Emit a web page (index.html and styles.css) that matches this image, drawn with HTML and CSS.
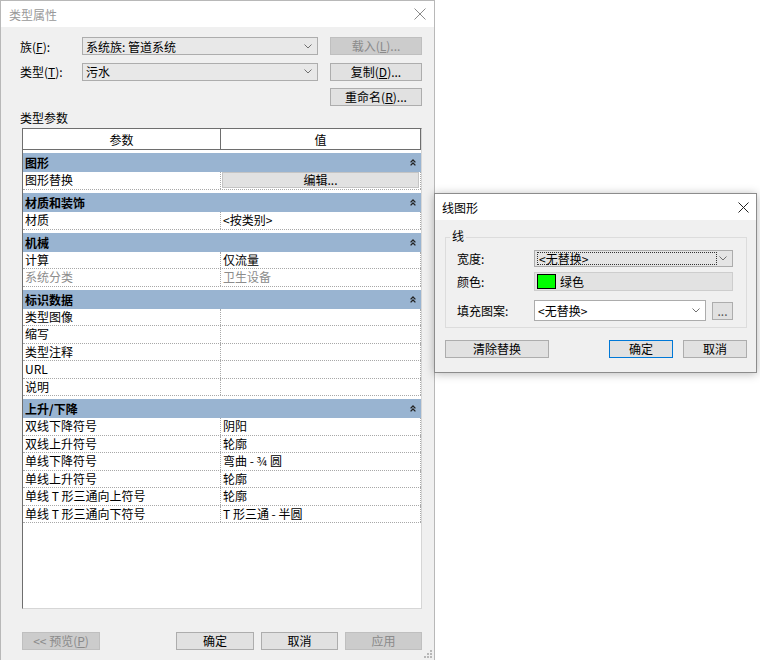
FILE: index.html
```html
<!DOCTYPE html>
<html lang="zh-CN">
<head>
<meta charset="utf-8">
<title>类型属性</title>
<link rel="stylesheet" href="styles.css">
</head>
<body>
<div class="desk">
  <section class="win main">
    <header class="titlebar">
      <span class="title">类型属性</span>
      <svg class="x" width="12" height="12" viewBox="0 0 12 12"><path d="M0.5 0.5 L11.5 11.5 M11.5 0.5 L0.5 11.5" stroke="#8a8a8a" stroke-width="1" fill="none"/></svg>
    </header>
    <div class="form">
      <label class="lab">族(<u>F</u>):</label>
      <div class="combo"><span>系统族: 管道系统</span><svg width="8" height="5" viewBox="0 0 8 5"><path d="M0.5 0.5 L4 4 L7.5 0.5" stroke="#707070" fill="none"/></svg></div>
      <button class="btn dis">载入(<u>L</u>)...</button>
      <label class="lab">类型(<u>T</u>):</label>
      <div class="combo"><span>污水</span><svg width="8" height="5" viewBox="0 0 8 5"><path d="M0.5 0.5 L4 4 L7.5 0.5" stroke="#707070" fill="none"/></svg></div>
      <button class="btn">复制(<u>D</u>)...</button>
      <span></span><span></span>
      <button class="btn">重命名(<u>R</u>)...</button>
    </div>
    <div class="caption">类型参数</div>
    <div class="grid">
      <div class="ghead"><div>参数</div><div>值</div></div>

      <div class="sect"><span>图形</span><svg width="6" height="7" viewBox="0 0 6 7"><path d="M0.6 3.4 L3 1 L5.4 3.4 M0.6 6.4 L3 4 L5.4 6.4" stroke="#222" stroke-width="1.3" fill="none"/></svg></div>
      <div class="row tall"><div>图形替换</div><div class="editcell"><button class="edit">编辑...</button></div></div>

      <div class="sect"><span>材质和装饰</span><svg width="6" height="7" viewBox="0 0 6 7"><path d="M0.6 3.4 L3 1 L5.4 3.4 M0.6 6.4 L3 4 L5.4 6.4" stroke="#222" stroke-width="1.3" fill="none"/></svg></div>
      <div class="row"><div>材质</div><div>&lt;按类别&gt;</div></div>

      <div class="sect"><span>机械</span><svg width="6" height="7" viewBox="0 0 6 7"><path d="M0.6 3.4 L3 1 L5.4 3.4 M0.6 6.4 L3 4 L5.4 6.4" stroke="#222" stroke-width="1.3" fill="none"/></svg></div>
      <div class="row"><div>计算</div><div>仅流量</div></div>
      <div class="row muted"><div>系统分类</div><div>卫生设备</div></div>

      <div class="sect"><span>标识数据</span><svg width="6" height="7" viewBox="0 0 6 7"><path d="M0.6 3.4 L3 1 L5.4 3.4 M0.6 6.4 L3 4 L5.4 6.4" stroke="#222" stroke-width="1.3" fill="none"/></svg></div>
      <div class="row"><div>类型图像</div><div></div></div>
      <div class="row"><div>缩写</div><div></div></div>
      <div class="row"><div>类型注释</div><div></div></div>
      <div class="row"><div>URL</div><div></div></div>
      <div class="row"><div>说明</div><div></div></div>

      <div class="sect"><span>上升/下降</span><svg width="6" height="7" viewBox="0 0 6 7"><path d="M0.6 3.4 L3 1 L5.4 3.4 M0.6 6.4 L3 4 L5.4 6.4" stroke="#222" stroke-width="1.3" fill="none"/></svg></div>
      <div class="row"><div>双线下降符号</div><div>阴阳</div></div>
      <div class="row"><div>双线上升符号</div><div>轮廓</div></div>
      <div class="row"><div>单线下降符号</div><div>弯曲 - ¾ 圆</div></div>
      <div class="row"><div>单线上升符号</div><div>轮廓</div></div>
      <div class="row"><div>单线 T 形三通向上符号</div><div>轮廓</div></div>
      <div class="row"><div>单线 T 形三通向下符号</div><div>T 形三通 - 半圆</div></div>
    </div>
    <div class="footer">
      <button class="btn dis wide">&lt;&lt; 预览(<u>P</u>)</button>
      <div class="fgroup">
        <button class="btn wide">确定</button>
        <button class="btn mid">取消</button>
        <button class="btn dis mid">应用</button>
      </div>
    </div>
    <svg class="grip" width="8" height="8" viewBox="0 0 8 8"><g fill="#b8b8b8"><rect x="6" y="0" width="2" height="2"/><rect x="6" y="3" width="2" height="2"/><rect x="3" y="3" width="2" height="2"/><rect x="6" y="6" width="2" height="2"/><rect x="3" y="6" width="2" height="2"/><rect x="0" y="6" width="2" height="2"/></g></svg>
  </section>

  <section class="win dlg">
    <header class="titlebar">
      <span class="title">线图形</span>
      <svg class="x" width="11" height="11" viewBox="0 0 11 11"><path d="M0.5 0.5 L10.5 10.5 M10.5 0.5 L0.5 10.5" stroke="#222" stroke-width="1" fill="none"/></svg>
    </header>
    <div class="gbox">
      <span class="legend">线</span>
      <div class="frow r1">
        <span class="flab">宽度:</span>
        <div class="dcombo"><span class="focus">&lt;无替换&gt;</span><svg width="8" height="5" viewBox="0 0 8 5"><path d="M0.5 0.5 L4 4 L7.5 0.5" stroke="#707070" fill="none"/></svg></div>
      </div>
      <div class="frow r2">
        <span class="flab">颜色:</span>
        <div class="colorfield"><span class="swatch"></span><span>绿色</span></div>
      </div>
      <div class="frow r3">
        <span class="flab">填充图案:</span>
        <div class="wcombo"><span>&lt;无替换&gt;</span><svg width="8" height="5" viewBox="0 0 8 5"><path d="M0.5 0.5 L4 4 L7.5 0.5" stroke="#707070" fill="none"/></svg></div>
        <button class="btn dots">...</button>
      </div>
    </div>
    <div class="dbtns">
      <button class="btn clear">清除替换</button>
      <div class="dgroup">
        <button class="btn small ok">确定</button>
        <button class="btn small">取消</button>
      </div>
    </div>
  </section>
</div>
</body>
</html>
```
FILE: styles.css
```css
* { box-sizing: border-box; }

body {
  margin: 0;
  background: #ffffff;
  font-family: "Noto Sans CJK SC", "Noto Sans", sans-serif;
  font-size: 12px;
  color: #000;
}

.desk {
  position: relative;
  width: 760px;
  height: 660px;
  overflow: hidden;
}

.win {
  background: #f0f0f0;
}

.titlebar {
  height: 26px;
  background: #ffffff;
  display: flex;
  align-items: center;
  justify-content: space-between;
}

/* ---------- main window ---------- */
.main {
  position: relative;
  width: 435px;
  height: 660px;
  border: 1px solid #b8b8b8;
  border-bottom: none;
}

.main .titlebar {
  padding: 0 8px 0 8px;
}

.main .title {
  color: #999999;
}

.form {
  display: grid;
  grid-template-columns: 50px 236px 92px;
  grid-auto-rows: 18px;
  column-gap: 12px;
  row-gap: 7.5px;
  margin: 10px 0 0 19px;
}

.lab {
  display: flex;
  align-items: center;
  white-space: nowrap;
}

.combo {
  display: flex;
  align-items: center;
  justify-content: space-between;
  border: 1px solid #adadad;
  background: #e8e8e8;
  padding: 0 5px 0 3px;
}

.btn {
  font: inherit;
  color: #000;
  background: #e1e1e1;
  border: 1px solid #adadad;
  padding: 0;
  height: 18px;
  line-height: 16px;
  text-align: center;
}

.btn.dis {
  background: #cccccc;
  border-color: #bfbfbf;
  color: #8a8a8a;
}

.caption {
  margin: 4px 0 0 19px;
  height: 16px;
  line-height: 16px;
}

.grid {
  margin: 2px 0 0 21px;
  width: 400px;
  height: 481px;
  background: #ffffff;
  border: 1px solid;
  border-color: #6e6e6e #d6d6d6 #d6d6d6 #6e6e6e;
}

.ghead {
  display: flex;
  height: 21px;
  border-bottom: 1px solid #6e6e6e;
}

.ghead div {
  display: flex;
  align-items: center;
  justify-content: center;
}

.ghead div:first-child {
  width: 198px;
  border-right: 1px solid #6e6e6e;
}

.ghead div:last-child {
  flex: 1;
  border-right: 1px solid #6e6e6e;
}

.sect {
  margin-top: 3px;
  height: 19px;
  background: #99b4d1;
  font-weight: bold;
  display: flex;
  align-items: center;
  justify-content: space-between;
  padding: 0 5px 0 2px;
}

.row {
  display: flex;
  height: 17.5px;
  border-bottom: 1px dotted #a8a8a8;
}

.row > div {
  line-height: 16.5px;
  padding-left: 2px;
  white-space: nowrap;
}

.row > div:first-child {
  width: 198px;
  border-right: 1px dotted #a8a8a8;
}

.row > div:last-child {
  flex: 1;
  border-right: 1px dotted #a8a8a8;
}

.row.tall {
  height: 18px;
}

.row .editcell {
  padding: 0 1px 0 1px;
}

.edit {
  font: inherit;
  width: 100%;
  height: 16px;
  line-height: 14px;
  padding: 0;
  background: #e1e1e1;
  border: 1px solid #c4c4c4;
  color: #000;
}

.row.muted {
  color: #8c8c8c;
}

.footer {
  display: flex;
  width: 400px;
  margin: 23px 0 0 21px;
}

.footer .wide { width: 78px; }
.footer .mid { width: 77px; }

.fgroup {
  margin-left: auto;
  display: flex;
  gap: 7px;
}

.grip {
  position: absolute;
  right: 2px;
  bottom: 2px;
}

/* ---------- line graphics dialog ---------- */
.dlg {
  position: absolute;
  left: 434px;
  top: 193px;
  width: 323px;
  height: 180px;
  border: 1px solid #8c8c8c;
  box-shadow: 0 1px 9px rgba(0, 0, 0, 0.28);
}

.dlg .titlebar {
  padding: 0 7px 0 7px;
}

.gbox {
  position: relative;
  margin: 17px 0 0 10px;
  width: 302px;
  height: 91px;
  border: 1px solid #dcdcdc;
  padding: 12px 0 0 11px;
}

.legend {
  position: absolute;
  left: 4px;
  top: -9px;
  padding: 0 2px;
  line-height: 14px;
  background: #f0f0f0;
}

.frow {
  display: flex;
  align-items: center;
}

.flab {
  width: 77px;
}

.r1 { height: 17px; }
.r2 { height: 19px; margin-top: 5px; }
.r3 { height: 21px; margin-top: 9px; }

.dcombo {
  width: 199px;
  height: 17px;
  display: flex;
  align-items: center;
  justify-content: space-between;
  background: #e5e5e5;
  border: 1px solid #acacac;
  padding: 0 5px 0 2px;
}

.focus {
  width: 180px;
  height: 13px;
  line-height: 11px;
  border: 1px dotted #333;
  padding-left: 1px;
}

.colorfield {
  width: 199px;
  height: 19px;
  display: flex;
  align-items: center;
  background: #e2e2e2;
  border: 1px solid #cdcdcd;
  padding-left: 2px;
}

.swatch {
  width: 19px;
  height: 15px;
  background: #00ff00;
  border: 1px solid #000;
  margin-right: 4px;
}

.wcombo {
  width: 172px;
  height: 21px;
  display: flex;
  align-items: center;
  justify-content: space-between;
  background: #ffffff;
  border: 1px solid #acacac;
  padding: 0 5px 0 3px;
}

.dots {
  width: 21px;
  height: 18px;
  margin-left: 6px;
  color: #555;
  line-height: 14px;
}

.dbtns {
  display: flex;
  width: 302px;
  margin: 12px 0 0 10px;
}

.clear { width: 104px; }

.dgroup {
  margin-left: auto;
  display: flex;
  gap: 10px;
}

.small { width: 64px; }

.ok {
  border-color: #0078d7;
}
```
